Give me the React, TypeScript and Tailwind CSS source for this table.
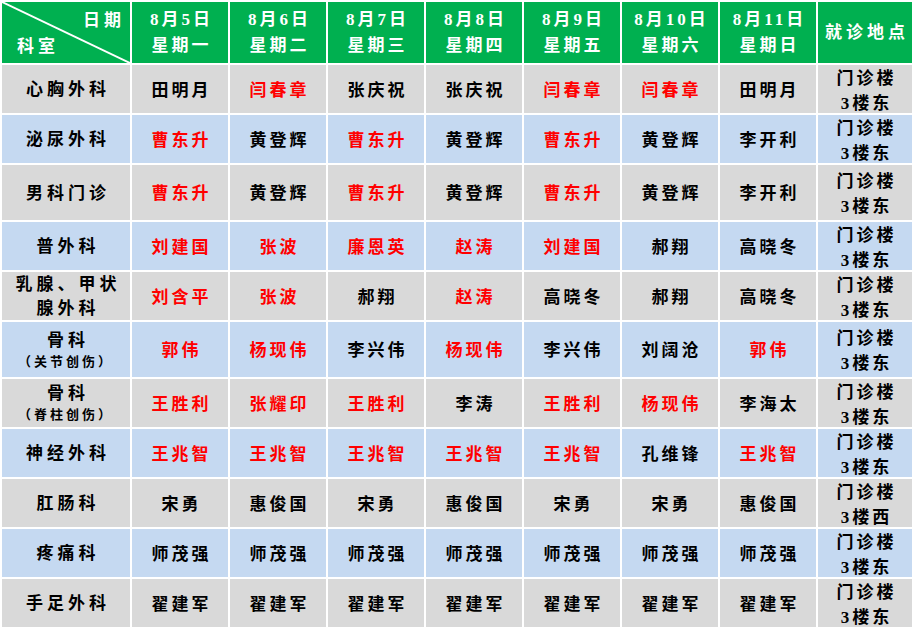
import React from "react";

type C = [string, boolean];

const rows: {
  dept: React.ReactNode;
  cells: C[];
  loc: string;
  bg: "g" | "b";
}[] = [];

const r = (s: string): C => [s, true];
const k = (s: string): C => [s, false];

const data: { dept: React.ReactNode; cells: C[]; loc: string }[] = [
  { dept: "心胸外科", cells: [k("田明月"), r("闫春章"), k("张庆祝"), k("张庆祝"), r("闫春章"), r("闫春章"), k("田明月")], loc: "3楼东" },
  { dept: "泌尿外科", cells: [r("曹东升"), k("黄登辉"), r("曹东升"), k("黄登辉"), r("曹东升"), k("黄登辉"), k("李开利")], loc: "3楼东" },
  { dept: "男科门诊", cells: [r("曹东升"), k("黄登辉"), r("曹东升"), k("黄登辉"), r("曹东升"), k("黄登辉"), k("李开利")], loc: "3楼东" },
  { dept: "普外科", cells: [r("刘建国"), r("张波"), r("廉恩英"), r("赵涛"), r("刘建国"), k("郝翔"), k("高晓冬")], loc: "3楼东" },
  {
    dept: (
      <div className="flex flex-col items-center leading-[24px]">
        <span className="tracking-[4px] pl-[4px]">乳腺、甲状</span>
        <span className="tracking-[4px] pl-[4px]">腺外科</span>
      </div>
    ),
    cells: [r("刘含平"), r("张波"), k("郝翔"), r("赵涛"), k("高晓冬"), k("郝翔"), k("高晓冬")],
    loc: "3楼东",
  },
  {
    dept: (
      <div className="flex flex-col items-center">
        <span className="tracking-[4px] pl-[4px] leading-[22px]">骨科</span>
        <span className="text-[13px] tracking-[3px] leading-[20px]">（关节创伤）</span>
      </div>
    ),
    cells: [r("郭伟"), r("杨现伟"), k("李兴伟"), r("杨现伟"), k("李兴伟"), k("刘阔沧"), r("郭伟")],
    loc: "3楼东",
  },
  {
    dept: (
      <div className="flex flex-col items-center">
        <span className="tracking-[4px] pl-[4px] leading-[22px]">骨科</span>
        <span className="text-[13px] tracking-[3px] leading-[20px]">（脊柱创伤）</span>
      </div>
    ),
    cells: [r("王胜利"), r("张耀印"), r("王胜利"), k("李涛"), r("王胜利"), r("杨现伟"), k("李海太")],
    loc: "3楼东",
  },
  { dept: "神经外科", cells: [r("王兆智"), r("王兆智"), r("王兆智"), r("王兆智"), r("王兆智"), k("孔维锋"), r("王兆智")], loc: "3楼东" },
  { dept: "肛肠科", cells: [k("宋勇"), k("惠俊国"), k("宋勇"), k("惠俊国"), k("宋勇"), k("宋勇"), k("惠俊国")], loc: "3楼西" },
  { dept: "疼痛科", cells: Array.from({ length: 7 }, () => k("师茂强")), loc: "3楼东" },
  { dept: "手足外科", cells: Array.from({ length: 7 }, () => k("翟建军")), loc: "3楼东" },
];

data.forEach((d, i) => rows.push({ ...d, bg: i % 2 === 0 ? "g" : "b" }));

const days = [
  ["8月5日", "星期一"],
  ["8月6日", "星期二"],
  ["8月7日", "星期三"],
  ["8月8日", "星期四"],
  ["8月9日", "星期五"],
  ["8月10日", "星期六"],
  ["8月11日", "星期日"],
];

const font = { fontFamily: '"Liberation Serif", "Noto Sans CJK SC", serif' };

export default function App() {
  return (
    <div className="w-[914px] h-[629px] bg-white p-[2px]" style={font}>
      <div className="grid grid-cols-[128px_96px_96px_96px_96px_96px_96px_96px_94px] grid-rows-[61px_48px_48px_55px_48px_48px_55px_48px_48px_48px_48px_48px] gap-[2px] text-[17px] font-bold text-black">
        {/* header */}
        <div className="relative bg-[#00b050] text-white flex flex-col justify-between pt-[9px] pb-[6px]">
          <svg className="absolute inset-0" width="128" height="61" viewBox="0 0 128 61">
            <line x1="0" y1="0" x2="128" y2="61" stroke="white" strokeWidth="2" />
          </svg>
          <div className="self-end pr-[5px] tracking-[4px] leading-[20px]">日期</div>
          <div className="self-start pl-[15px] tracking-[4px] leading-[20px]">科室</div>
        </div>
        {days.map(([d, w]) => (
          <div key={d} className="bg-[#00b050] text-white flex flex-col items-center justify-center leading-[26px] pt-[1px]">
            <span className="tracking-[3px] pl-[3px]">{d}</span>
            <span className="tracking-[3px] pl-[3px]">{w}</span>
          </div>
        ))}
        <div className="bg-[#00b050] text-white flex items-center justify-center">
          <span className="tracking-[4px] pl-[4px]">就诊地点</span>
        </div>

        {rows.map((row, i) => {
          const bg = row.bg === "g" ? "bg-[#d9d9d9]" : "bg-[#c5d9f1]";
          return (
            <React.Fragment key={i}>
              <div className={`${bg} flex items-center justify-center pt-[2px]`}>
                {typeof row.dept === "string" ? (
                  <span className="tracking-[4px] pl-[4px]">{row.dept}</span>
                ) : (
                  row.dept
                )}
              </div>
              {row.cells.map(([name, red], j) => (
                <div key={j} className={`${bg} flex items-center justify-center pt-[3px]`}>
                  <span className={`tracking-[3px] pl-[3px] ${red ? "text-[#ff0000]" : "text-black"}`}>{name}</span>
                </div>
              ))}
              <div className={`${bg} flex flex-col items-center justify-center leading-[25px] pt-[3px] overflow-hidden`}>
                <span className="tracking-[3px] pl-[3px]">门诊楼</span>
                <span className="tracking-[3px] pl-[3px]">{row.loc}</span>
              </div>
            </React.Fragment>
          );
        })}
      </div>
    </div>
  );
}
